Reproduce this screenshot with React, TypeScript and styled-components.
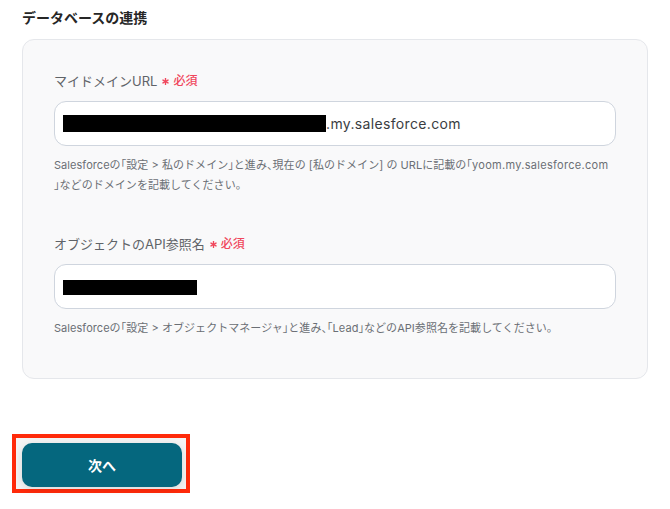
import React from "react";
import styled, { createGlobalStyle } from "styled-components";

const Global = createGlobalStyle`
  html, body { margin: 0; padding: 0; background: #ffffff; }
  body {
    font-family: "Inter", "Noto Sans CJK JP", sans-serif;
    -webkit-font-smoothing: antialiased;
  }
`;

const Page = styled.div`
  width: 670px;
  height: 509px;
  box-sizing: border-box;
  padding: 7px 22px 0 22px;
  display: flex;
  flex-direction: column;
`;

const Title = styled.h2`
  margin: 0;
  font-size: 14px;
  line-height: 22px;
  font-weight: 600;
  color: #262626;
`;

const Card = styled.section`
  margin-top: 10px;
  width: 626px;
  box-sizing: border-box;
  border: 1px solid #e5e7eb;
  border-radius: 12px;
  background: #f9f9fa;
  padding: 31px 31px 40px 31px;
  display: flex;
  flex-direction: column;
`;

const Field = styled.div<{ $gapTop?: number }>`
  display: flex;
  flex-direction: column;
  margin-top: ${(p) => p.$gapTop ?? 0}px;
`;

const Label = styled.div`
  font-size: 13px;
  line-height: 20px;
  font-weight: 400;
  color: #5f6368;
  display: flex;
  align-items: center;
  gap: 5px;
`;

const Required = styled.span`
  color: #f0475c;
  font-size: 12px;
  font-weight: 500;
  display: inline-flex;
  align-items: center;
  gap: 4px;
`;

const StarIcon = styled.svg`
  width: 7px;
  height: 7px;
  display: block;
  margin-top: 1px;
`;

const InputBox = styled.div`
  margin-top: 10px;
  height: 45px;
  box-sizing: border-box;
  border: 1px solid #cfd5de;
  border-radius: 12px;
  background: #ffffff;
  display: flex;
  align-items: center;
  padding: 0 8px;
  font-size: 14px;
  color: #3a3d42;
  letter-spacing: 0.35px;
`;

const Redact = styled.span<{ $w: number; $h: number }>`
  display: inline-block;
  width: ${(p) => p.$w}px;
  height: ${(p) => p.$h}px;
  background: #000000;
  margin-top: ${(p) => (p.$h < 16 ? 2 : 0)}px;
`;

const Help = styled.p`
  margin: 9px 0 0 0;
  font-size: 11px;
  line-height: 20px;
  color: #6b6f75;
  letter-spacing: 0.05px;
`;

const Punct = styled.span`
  font-feature-settings: "halt";
`;

const Latin = styled.span`
  letter-spacing: 0.3px;
`;

const Footer = styled.div`
  margin-top: 55px;
  margin-left: -10px;
  display: flex;
`;

const Highlight = styled.div`
  border: 4px solid #ff2a0a;
  padding: 5px 4px 2px 6px;
  background: #f4f4f4;
`;

const NextButton = styled.button`
  width: 160px;
  height: 44px;
  border: none;
  border-radius: 10px;
  background: #05677e;
  color: #ffffff;
  font-family: "Inter", "Noto Sans CJK JP", sans-serif;
  font-size: 14px;
  font-weight: 700;
  box-shadow: 0 2px 8px rgba(0, 0, 0, 0.12);
  cursor: pointer;
`;

function RequiredMark() {
  return (
    <Required>
      <StarIcon viewBox="0 0 10 10" aria-hidden="true">
        <g stroke="#f0475c" strokeWidth="2" strokeLinecap="round">
          <line x1="5" y1="0.8" x2="5" y2="9.2" />
          <line x1="1.4" y1="2.9" x2="8.6" y2="7.1" />
          <line x1="1.4" y1="7.1" x2="8.6" y2="2.9" />
        </g>
      </StarIcon>
      必須
    </Required>
  );
}

export default function App() {
  return (
    <>
      <Global />
      <Page>
        <Title>データベースの連携</Title>
        <Card>
          <Field>
            <Label>
              マイドメインURL
              <RequiredMark />
            </Label>
            <InputBox>
              <Redact $w={263} $h={17} />
              .my.salesforce.com
            </InputBox>
            <Help>
              Salesforceの<Punct>「</Punct>設定 &gt; 私のドメイン<Punct>」</Punct>と進み
              <Punct>、</Punct>現在の [私のドメイン] の URLに記載の<Punct>「</Punct>
              <Latin>yoom.my.salesforce.com</Latin>
              <br />
              <Punct>」</Punct>などのドメインを記載してください。
            </Help>
          </Field>
          <Field $gapTop={39}>
            <Label>
              オブジェクトのAPI参照名
              <RequiredMark />
            </Label>
            <InputBox>
              <Redact $w={134} $h={15} />
            </InputBox>
            <Help>
              Salesforceの<Punct>「</Punct>設定 &gt; オブジェクトマネージャ<Punct>」</Punct>と進み
              <Punct>、「</Punct>Lead<Punct>」</Punct>などのAPI参照名を記載してください。
            </Help>
          </Field>
        </Card>
        <Footer>
          <Highlight>
            <NextButton>次へ</NextButton>
          </Highlight>
        </Footer>
      </Page>
    </>
  );
}
